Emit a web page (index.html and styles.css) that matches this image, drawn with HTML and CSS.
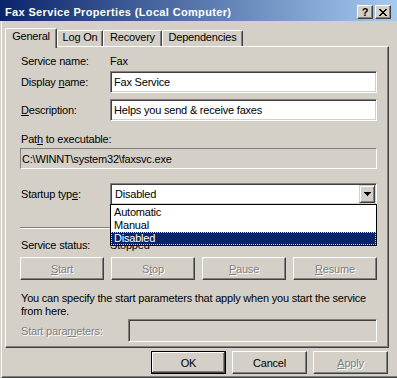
FILE: index.html
```html
<!DOCTYPE html>
<html>
<head>
<meta charset="utf-8">
<title>Fax Service Properties</title>
<link rel="stylesheet" href="styles.css">
</head>
<body>
<div class="window">
  <div class="titlebar">
    <span class="title">Fax Service Properties (Local Computer)</span>
    <div class="tbtns">
      <span class="tbtn help">?</span>
      <span class="tbtn close"><svg width="8" height="7" viewBox="0 0 8 7" shape-rendering="crispEdges"><path d="M0 0h2v1h-2zM6 0h2v1h-2zM1 1h2v1h-2zM5 1h2v1h-2zM2 2h4v1h-4zM3 3h2v1h-2zM2 4h4v1h-4zM1 5h2v1h-2zM5 5h2v1h-2zM0 6h2v1h-2zM6 6h2v1h-2z" fill="#000"/></svg></span>
    </div>
  </div>
  <div class="frame">
    <div class="tabs">
      <div class="tab sel t-gen">General</div>
      <div class="tab t-log">Log On</div>
      <div class="tab t-rec">Recovery</div>
      <div class="tab t-dep">Dependencies</div>
    </div>
    <div class="panel">
      <div class="row r-name">
        <span class="lbl">Service name:</span>
        <span class="val">Fax</span>
      </div>
      <div class="row r-disp">
        <span class="lbl">Display <u>n</u>ame:</span>
        <div class="edit">Fax Service</div>
      </div>
      <div class="row r-desc">
        <span class="lbl"><u>D</u>escription:</span>
        <div class="edit">Helps you send &amp; receive faxes</div>
      </div>
      <div class="r-pathlbl">Pat<u>h</u> to executable:</div>
      <div class="pathbox">C:\WINNT\system32\faxsvc.exe</div>
      <div class="row r-start">
        <span class="lbl">Startup typ<u>e</u>:</span>
        <div class="combo">
          <span class="combo-text">Disabled</span>
          <span class="dd-btn"><svg width="7" height="4" viewBox="0 0 7 4" shape-rendering="crispEdges"><path d="M0 0h7v1h-7zM1 1h5v1h-5zM2 2h3v1h-3zM3 3h1v1h-1z" fill="#000"/></svg></span>
          <div class="list">
            <div class="item">Automatic</div>
            <div class="item">Manual</div>
            <div class="item hl">Disabled</div>
          </div>
        </div>
      </div>
      <div class="sep"></div>
      <div class="row r-status">
        <span class="lbl">Service status:</span>
        <span class="val">Stopped</span>
      </div>
      <div class="btnrow">
        <div class="btn dis"><u>S</u>tart</div>
        <div class="btn dis">S<u>t</u>op</div>
        <div class="btn dis"><u>P</u>ause</div>
        <div class="btn dis"><u>R</u>esume</div>
      </div>
      <div class="para">You can specify the start parameters that apply when you start the service<br>from here.</div>
      <div class="row r-params">
        <span class="lbl lbl-wide distext">Start para<u>m</u>eters:</span>
        <div class="edit edit-dis"></div>
      </div>
    </div>
    <div class="dlg">
      <div class="btn def">OK</div>
      <div class="btn">Cancel</div>
      <div class="btn dis"><u>A</u>pply</div>
    </div>
  </div>
</div>
</body>
</html>
```
FILE: styles.css
```css
* { box-sizing: border-box; }
html, body { margin: 0; padding: 0; }
body {
  width: 397px;
  height: 378px;
  overflow: hidden;
  background: #D4D0C8;
  font-family: "Liberation Sans", Arial, sans-serif;
  font-size: 11px;
  letter-spacing: -0.2px;
  color: #000;
}
u { text-decoration: underline; text-underline-offset: 1px; }

.window {
  width: 397px;
  height: 378px;
  display: flex;
  flex-direction: column;
}

.titlebar {
  height: 21px;
  flex: none;
  background: linear-gradient(to right, #0A246A, #A6CAF0);
  display: flex;
  justify-content: space-between;
  align-items: flex-start;
}
.title {
  color: #fff;
  font-weight: bold;
  letter-spacing: 0.35px;
  line-height: 14px;
  padding: 5px 0 0 5px;
  white-space: nowrap;
}
.tbtns {
  display: flex;
  gap: 2px;
  padding: 5px 6px 0 0;
}
.tbtn {
  width: 16px;
  height: 14px;
  background: #D4D0C8;
  border: 1px solid;
  border-color: #fff #404040 #404040 #fff;
  box-shadow: inset -1px -1px #808080;
  display: flex;
  align-items: center;
  justify-content: center;
  font-weight: bold;
  font-size: 11px;
  line-height: 1;
  letter-spacing: 0;
  color: #000;
}
.tbtn svg { display: block; }

.frame {
  flex: 1;
  margin-left: 1px;
  border-left: 1px solid #fff;
  border-bottom: 1px solid #404040;
  box-shadow: inset 0 -1px #808080;
  display: flex;
  flex-direction: column;
  padding-top: 7px;
}

.tabs {
  height: 18px;
  flex: none;
  display: flex;
  align-items: flex-end;
  margin-left: 3px;
  position: relative;
  z-index: 1;
}
.tab {
  height: 16px;
  background: #D4D0C8;
  border-top: 1px solid #fff;
  border-left: 1px solid #fff;
  border-right: 1px solid #404040;
  border-top-left-radius: 2px;
  border-top-right-radius: 2px;
  box-shadow: inset -1px 0 #808080;
  text-align: center;
  line-height: 13px;
  white-space: nowrap;
}
.tab.sel {
  height: 20px;
  margin-bottom: -2px;
  line-height: 14px;
  padding-top: 0;
}
.t-gen { width: 52px; }
.t-log { width: 46px; }
.t-rec { width: 59px; }
.t-dep { width: 81px; }

.panel {
  height: 302px;
  width: 384px;
  flex: none;
  margin-left: 3px;
  border: 1px solid;
  border-color: #fff #404040 #404040 #fff;
  box-shadow: inset -1px -1px #808080;
  padding: 6px 11px 0 14px;
  display: flex;
  flex-direction: column;
}

.row { display: flex; align-items: center; }
.lbl { width: 90px; flex: none; white-space: nowrap; padding-left: 1px; }
.lbl-wide { width: 108px; }
.val { white-space: nowrap; }

.r-name { height: 15px; }
.r-disp { height: 22px; margin-top: 3px; }
.r-desc { height: 22px; margin-top: 6px; }

.edit {
  flex: 1;
  height: 100%;
  background: #fff;
  border: 1px solid;
  border-color: #808080 #fff #fff #808080;
  box-shadow: inset 1px 1px #404040, inset -1px -1px #D4D0C8;
  padding-left: 3px;
  display: flex;
  align-items: center;
  white-space: nowrap;
}
.edit-dis { background: #D4D0C8; }

.r-pathlbl { margin-top: 12px; line-height: 13px; padding-left: 1px; }
.pathbox {
  margin-top: 2px;
  height: 21px;
  flex: none;
  border: 1px solid;
  border-color: #808080 #fff #fff #808080;
  padding-left: 1px;
  display: flex;
  align-items: center;
  white-space: nowrap;
}

.r-start { height: 22px; margin-top: 14px; }
.combo {
  flex: 1;
  height: 100%;
  position: relative;
  background: #fff;
  border: 1px solid;
  border-color: #808080 #fff #fff #808080;
  box-shadow: inset 1px 1px #404040, inset -1px -1px #D4D0C8;
  padding: 1px 1px 1px 4px;
  display: flex;
  align-items: center;
}
.combo-text { flex: 1; }
.dd-btn {
  width: 16px;
  height: 18px;
  align-self: stretch;
  background: #D4D0C8;
  border: 1px solid;
  border-color: #D4D0C8 #404040 #404040 #D4D0C8;
  box-shadow: inset 1px 1px #fff, inset -1px -1px #808080;
  display: flex;
  align-items: center;
  justify-content: center;
}
.dd-btn svg { display: block; }

.list {
  position: absolute;
  top: calc(100% + 0px);
  left: -1px;
  right: -1px;
  height: 42px;
  background: #fff;
  border: 1px solid #000;
  padding-top: 1px;
  z-index: 2;
}
.item {
  height: 13px;
  line-height: 11px;
  padding-left: 2px;
  border: 1px solid transparent;
  white-space: nowrap;
}
.item.hl {
  background: #0A246A;
  color: #fff;
  border: 1px dotted #E8D890;
}

.sep {
  margin-top: 22px;
  height: 2px;
  flex: none;
  border-top: 1px solid #808080;
  border-bottom: 1px solid #fff;
}

.r-status { margin-top: 10px; height: 13px; line-height: 13px; }

.btnrow {
  margin-top: 5px;
  display: grid;
  grid-template-columns: repeat(4, 1fr);
  gap: 7px;
}

.btn {
  height: 23px;
  background: #D4D0C8;
  border: 1px solid;
  border-color: #fff #404040 #404040 #fff;
  box-shadow: inset -1px -1px #808080;
  display: flex;
  align-items: center;
  justify-content: center;
  white-space: nowrap;
}
.btn.dis, .distext {
  color: #808080;
  text-shadow: 1px 1px 0 #fff;
}
.btn.def {
  border: 1px solid #000;
  box-shadow: inset -1px -1px #404040, inset 1px 1px #fff, inset -2px -2px #808080;
}

.para {
  margin-top: 12px;
  line-height: 13px;
  padding-left: 1px;
  white-space: nowrap;
}

.r-params { height: 23px; margin-top: 1px; }

.dlg {
  margin-top: 3px;
  display: flex;
  justify-content: flex-end;
  gap: 6px;
  padding-right: 9px;
}
.dlg .btn { width: 75px; }
```
